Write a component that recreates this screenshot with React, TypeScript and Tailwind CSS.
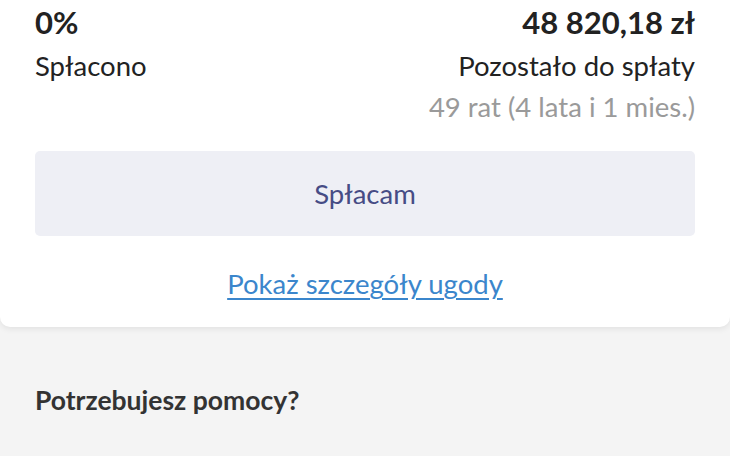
import React from "react";

const FONT = { fontFamily: "Lato, 'Noto Sans', sans-serif" };

export default function App() {
  return (
    <div className="min-h-[456px] w-[730px] overflow-hidden bg-[#f4f4f4]" style={FONT}>
      <section className="rounded-b-[10px] bg-white px-[35px] pb-[25px] shadow-[0_2px_6px_rgba(0,0,0,0.08)]">
        <div className="flex justify-between">
          <div>
            <p className="text-[31px] font-bold leading-[44px] text-[#222]">0%</p>
            <p className="text-[27.5px] leading-[44px] text-[#222]">Spłacono</p>
          </div>
          <div className="text-right">
            <p className="text-[31px] font-bold leading-[44px] text-[#222]">48 820,18 zł</p>
            <p className="text-[27.5px] leading-[44px] text-[#222]">Pozostało do spłaty</p>
            <p className="text-[27.5px] leading-[38px] text-[#9a9a9a]">49 rat (4 lata i 1 mies.)</p>
          </div>
        </div>
        <button
          type="button"
          className="mt-[25px] flex h-[85px] w-full items-center justify-center rounded-[5px] bg-[#eeeff5] text-[27.5px] text-[#464c85]"
        >
          Spłacam
        </button>
        <div className="mt-[30px] flex justify-center">
          <a href="#" className="text-[27.5px] leading-[36px] text-[#3b86cc] underline underline-offset-[4px]">
            Pokaż szczegóły ugody
          </a>
        </div>
      </section>
      <h3 className="px-[35px] pt-[53px] text-[26.5px] font-bold leading-[40px] text-[#333]">Potrzebujesz pomocy?</h3>
    </div>
  );
}
